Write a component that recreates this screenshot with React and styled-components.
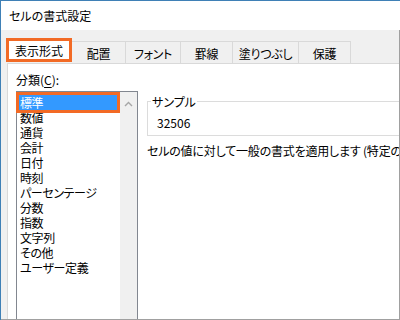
import styled, { createGlobalStyle } from "styled-components";

const GlobalStyle = createGlobalStyle`
  html, body {
    margin: 0;
    padding: 0;
    background: #ffffff;
  }
  body {
    font-family: "Noto Sans CJK JP", "Noto Sans", sans-serif;
    font-size: 12px;
    font-feature-settings: "palt";
    color: #000000;
  }
`;

const Window = styled.div`
  width: 400px;
  height: 320px;
  box-sizing: border-box;
  border-top: 1px solid #3f80b6;
  border-left: 1px solid #3f80b6;
  display: flex;
  flex-direction: column;
  overflow: hidden;
  background: #ffffff;
`;

const TitleBar = styled.div`
  height: 29px;
  flex: none;
  display: flex;
  align-items: center;
  padding-left: 8px;
  line-height: 15px;
  background: #ffffff;
`;

const Body = styled.div`
  flex: 1;
  min-height: 0;
  display: flex;
  flex-direction: column;
  background: #f0f0f0;
  padding-left: 5px;
  border-right: 1px solid #a0a0a0;
  border-bottom: 1px solid #a0a0a0;
`;

const TabRow = styled.div`
  height: 33px;
  flex: none;
  display: flex;
  align-items: flex-end;
`;

const Tab = styled.div`
  box-sizing: border-box;
  height: 22px;
  width: ${(p) => p.$width}px;
  flex: none;
  padding-top: 1px;
  display: flex;
  align-items: center;
  justify-content: center;
  line-height: 15px;
  white-space: nowrap;
  letter-spacing: -0.3px;
  background: #f0f0f0;
  border-top: 1px solid #d9d9d9;
  border-right: 1px solid #d9d9d9;
`;

const ActiveTab = styled.div`
  box-sizing: border-box;
  height: 24px;
  margin-bottom: 1px;
  flex: none;
  padding: 1px 6px 0;
  display: flex;
  align-items: center;
  line-height: 15px;
  white-space: nowrap;
  background: #ffffff;
  border: 3px solid #f26a25;
`;

const Panel = styled.div`
  flex: 1;
  min-height: 0;
  margin-left: 1px;
  display: flex;
  padding: 8px 0 0 8px;
  background: #ffffff;
  border-top: 1px solid #d9d9d9;
  border-left: 1px solid #d9d9d9;
  overflow: hidden;
`;

const LeftColumn = styled.div`
  width: 122px;
  flex: none;
  display: flex;
  flex-direction: column;
`;

const Label = styled.div`
  line-height: 15px;
  white-space: nowrap;

  u {
    text-decoration: underline;
    text-underline-offset: 2px;
  }
`;

const ListBox = styled.div`
  margin-top: 4px;
  height: 260px;
  flex: none;
  display: flex;
  border: 1px solid #828790;
`;

const Items = styled.div`
  flex: 1;
  padding: 3px 3px 0 2px;
`;

const Item = styled.div`
  height: 15px;
  line-height: 15px;
  padding-left: 1px;
  white-space: nowrap;
  letter-spacing: -0.4px;
  color: ${(p) => (p.$selected ? "#ffffff" : "#000000")};
  background: ${(p) => (p.$selected ? "#3399ff" : "transparent")};
  outline: ${(p) => (p.$selected ? "3px solid #f26a25" : "none")};
`;

const ScrollTrack = styled.div`
  width: 17px;
  flex: none;
  background: #f0f0f0;
  display: flex;
  justify-content: center;
  padding-top: 9px;
  box-sizing: border-box;
`;

const RightColumn = styled.div`
  margin-left: 9px;
  width: 420px;
  flex: none;
  display: flex;
  flex-direction: column;
`;

const SampleBox = styled.fieldset`
  margin: 22px 0 0 0;
  padding: 6px 0 5px 9px;
  border: 1px solid #dcdcdc;
  min-width: 0;
`;

const Legend = styled.legend`
  padding: 0 1px;
  margin-left: -6px;
  line-height: 15px;
`;

const SampleValue = styled.div`
  line-height: 15px;
`;

const Description = styled.div`
  margin-top: 7px;
  line-height: 15px;
  white-space: nowrap;
  letter-spacing: -0.2px;
`;

const tabs = [
  { label: "配置", width: 54 },
  { label: "フォント", width: 55 },
  { label: "罫線", width: 52 },
  { label: "塗りつぶし", width: 66 },
  { label: "保護", width: 52 },
];

const categories = [
  "標準",
  "数値",
  "通貨",
  "会計",
  "日付",
  "時刻",
  "パーセンテージ",
  "分数",
  "指数",
  "文字列",
  "その他",
  "ユーザー定義",
];

function UpArrow() {
  return (
    <svg width="9" height="6" viewBox="0 0 9 6">
      <path d="M1 5 L4.5 1.5 L8 5" fill="none" stroke="#a6a6a6" strokeWidth="1.4" />
    </svg>
  );
}

export default function App() {
  return (
    <>
      <GlobalStyle />
      <Window>
        <TitleBar>セルの書式設定</TitleBar>
        <Body>
          <TabRow>
            <ActiveTab>表示形式</ActiveTab>
            {tabs.map((t) => (
              <Tab key={t.label} $width={t.width}>
                {t.label}
              </Tab>
            ))}
          </TabRow>
          <Panel>
            <LeftColumn>
              <Label>
                分類(<u>C</u>):
              </Label>
              <ListBox>
                <Items>
                  {categories.map((c, i) => (
                    <Item key={c} $selected={i === 0}>
                      {c}
                    </Item>
                  ))}
                </Items>
                <ScrollTrack>
                  <UpArrow />
                </ScrollTrack>
              </ListBox>
            </LeftColumn>
            <RightColumn>
              <SampleBox>
                <Legend>サンプル</Legend>
                <SampleValue>32506</SampleValue>
              </SampleBox>
              <Description>
                セルの値に対して一般の書式を適用します (特定の書式は設定されません)。
              </Description>
            </RightColumn>
          </Panel>
        </Body>
      </Window>
    </>
  );
}
